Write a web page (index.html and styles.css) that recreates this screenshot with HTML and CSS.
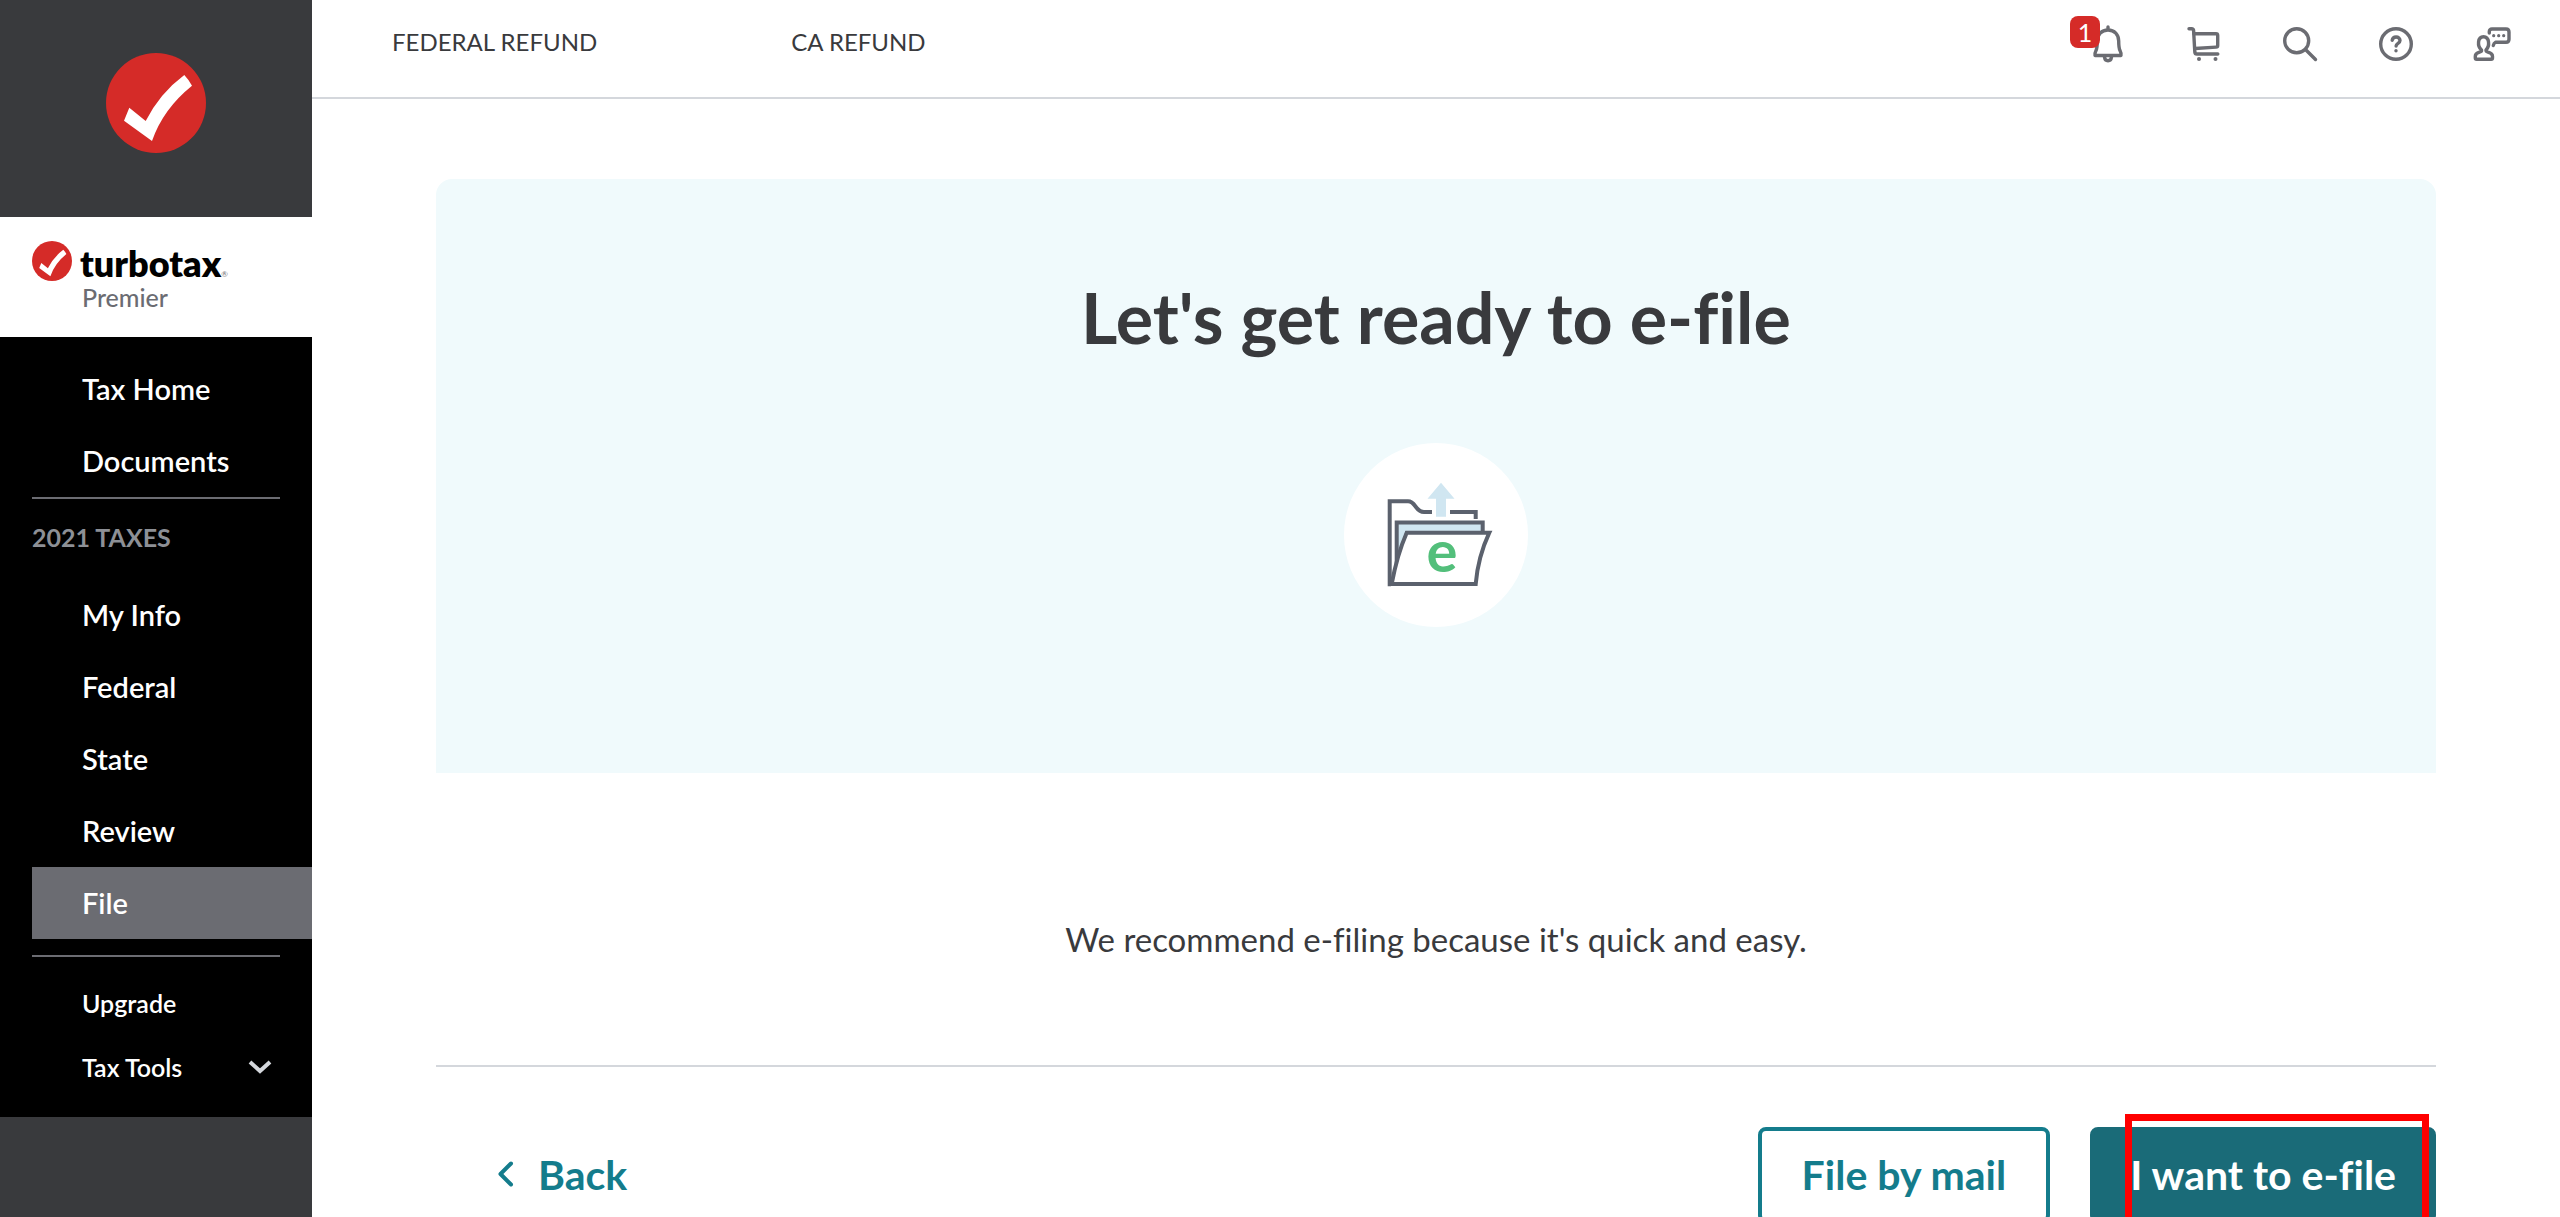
FILE: index.html
```html
<!DOCTYPE html>
<html lang="en">
<head>
    <meta charset="UTF-8">
    <meta name="viewport" content="width=device-width, initial-scale=1.0">
    <title>TurboTax - File</title>
    <link rel="stylesheet" href="styles.css">
</head>
<body>
    <!-- logo check, used twice -->
    <svg class="defs" aria-hidden="true">
        <symbol id="check" viewBox="0 0 100 100">
            <circle cx="50" cy="50" r="50" fill="#d52b28"/>
            <path fill="#fff" d="M23.3 54.7L18 67.7 46 88Q57 56 86 32.7Q83 27 78.3 22Q54 40 39.7 68Z"/>
        </symbol>
    </svg>

    <aside class="sidebar">
        <a class="logo" href="#" aria-label="Home"><svg><use href="#check"/></svg></a>
        <div class="brand">
            <svg><use href="#check"/></svg>
            <div class="brand-text">
                <div class="brand-name">turbotax<span class="reg">®</span></div>
                <div class="brand-plan">Premier</div>
            </div>
        </div>
        <nav class="nav">
            <a href="#">Tax Home</a>
            <a href="#">Documents</a>
            <hr>
            <h2>2021 TAXES</h2>
            <a href="#">My Info</a>
            <a href="#">Federal</a>
            <a href="#">State</a>
            <a href="#">Review</a>
            <a href="#" class="active">File</a>
            <hr class="spaced">
            <a href="#" class="small">Upgrade</a>
            <button type="button" class="small">Tax Tools
                <svg class="chevron" viewBox="0 0 24 14"><path d="M2 2l10 9L22 2"/></svg>
            </button>
        </nav>
    </aside>

    <div class="page">
        <header class="topbar">
            <div class="refunds">
                <span class="refund">FEDERAL REFUND</span>
                <span class="refund">CA REFUND</span>
            </div>
            <div class="tools">
                <button type="button" aria-label="Notifications">
                    <svg viewBox="0 0 40 40">
                        <path d="M20 3v3M20 6c-6.500 0-10.700 4.500-10.700 11 0 5 0 7-1.300 9.500-1 2-1.600 3.300-1 5h26c.6-1.700 0-3-1-5-1.300-2.500-1.300-4.500-1.300-9.500C30.700 10.500 26.500 6 20 6z"/>
                        <path d="M16.500 33c.3 2.300 1.600 3.700 3.500 3.700s3.200-1.400 3.500-3.700"/>
                    </svg>
                    <span class="badge">1</span>
                </button>
                <button type="button" aria-label="Cart">
                    <svg viewBox="0 0 40 40">
                        <path d="M5 4.700h2.500q2 0 2.100 2L10.800 28q.2 2 2 2h21"/>
                        <path d="M10 9.700h22q1.700 0 1.700 1.700v10q0 1.600-1.700 1.700L11 24.500"/>
                        <circle class="dot" cx="15" cy="35" r="2"/><circle class="dot" cx="31.500" cy="35" r="2"/>
                    </svg>
                </button>
                <button type="button" aria-label="Search">
                    <svg viewBox="0 0 40 40"><circle cx="16.700" cy="16.700" r="12"/><path d="M25.500 25.500L35.500 35.500"/></svg>
                </button>
                <button type="button" aria-label="Help">
                    <svg viewBox="0 0 40 40">
                        <circle cx="20" cy="20" r="15.300"/>
                        <path d="M16.200 16.300c.3-2 1.900-3.300 3.900-3.300 2.200 0 3.900 1.500 3.900 3.600 0 2.900-3.900 2.700-3.900 5.400"/>
                        <circle class="dot" cx="20" cy="26.700" r="1.700"/>
                    </svg>
                </button>
                <button type="button" aria-label="Live help">
                    <svg viewBox="0 0 40 40">
                        <path d="M17.300 9V7.500Q17.300 5 20 5h14q3 0 3 3v7.300q0 3-3 3H23.500q-1.700.7-2.200 3.200"/>
                        <path d="M9.500 26C5 22 5.500 12.700 11.500 12.700S18 22 14 26q-.2 1.500 2 2.200c3 .8 4.500 1.800 4.500 4V34q0 1.300-1.300 1.300H4.600Q3.300 35.300 3.300 34v-1.800c0-2.200 1.500-3.200 4.200-4 2-.6 2.300-1.200 2-2.200z"/>
                        <circle class="dot" cx="21.700" cy="11.700" r="1.600"/><circle class="dot" cx="26.700" cy="11.700" r="1.600"/><circle class="dot" cx="31.700" cy="11.700" r="1.600"/>
                    </svg>
                </button>
            </div>
        </header>

        <main class="content">
            <section class="hero">
                <h1>Let's get ready to e-file</h1>
                <svg class="folder" viewBox="0 0 184 184">
                    <circle cx="92" cy="92" r="92" fill="#fff"/>
                    <g fill="none" stroke="#5b616d" stroke-width="4">
                        <path d="M47 141.300H45.700v-83H64c8 0 7 10.700 16 10.700h8M106 69h25.700v7"/>
                        <path fill="#d0e6f1" d="M52.700 122V79.500h86V90H63z"/>
                        <path fill="#fff" d="M62.700 89.700h82.600Q134 114 131.700 141H47.700Q53 112 62.700 89.700z"/>
                    </g>
                    <path fill="#d0e6f1" d="M97 39.700l13.500 16H102v18H92v-18h-8.500z"/>
                    <text x="98" y="129" text-anchor="middle">e</text>
                </svg>
            </section>
            <p class="lead">We recommend e-filing because it's quick and easy.</p>
            <footer class="actions">
                <button type="button" class="back">
                    <svg viewBox="0 0 16 26"><path d="M13 2.500L2.500 13 13 23.500"/></svg>Back
                </button>
                <button type="button" class="btn outline">File by mail</button>
                <div class="highlighted">
                    <button type="button" class="btn primary">I want to e-file</button>
                    <span class="highlight"></span>
                </div>
            </footer>
        </main>
    </div>
</body>
</html>
```

FILE: styles.css
```css
* {
    box-sizing: border-box;
}
body {
    margin: 0;
    display: flex;
    height: 100vh;
    overflow: hidden;
    background: #fff;
    color: #393a3d;
    font-family: Lato, "Open Sans", sans-serif;
    font-variant-ligatures: none;
}
a {
    text-decoration: none;
}
button {
    font-family: inherit;
    font-variant-ligatures: none;
    border: 0;
    background: none;
    cursor: pointer;
}
svg {
    display: block;
}
.defs {
    position: absolute;
    width: 0;
    height: 0;
}

/* sidebar */
.sidebar {
    flex: 0 0 312px;
    background: #393a3d;
}
.logo {
    display: block;
    padding: 53px 106px 64px;
}
.logo svg {
    width: 100px;
    height: 100px;
}
.brand {
    display: flex;
    gap: 8px;
    height: 120px;
    padding: 24px 32px;
    background: #fff;
}
.brand svg {
    width: 40px;
    height: 40px;
}
.brand-name {
    color: #000;
    font-size: 36px;
    font-weight: 800;
    line-height: 44px;
}
.reg {
    color: #777;
    font-size: 8px;
    font-weight: 400;
    line-height: 8px;
}
.brand-plan {
    padding-left: 2px;
    color: #6b6c72;
    font-size: 25px;
    font-weight: 500;
    line-height: 24px;
}
.nav {
    padding: 16px 0;
    background: #000;
}
.nav a,
.nav button {
    display: flex;
    align-items: center;
    width: 280px;
    height: 72px;
    margin-left: 32px;
    padding: 0 32px 2px 50px;
    color: #fff;
    font-size: 29px;
    font-weight: 600;
}
.nav .active {
    background: #6b6c72;
}
.nav .small {
    height: 64px;
    padding-bottom: 4px;
    font-size: 25px;
}
.nav hr {
    height: 2px;
    margin: 0 32px;
    border: 0;
    background: #6b6c72;
}
.nav hr.spaced {
    margin: 16px 32px;
}
.nav h2 {
    margin: 0 32px 4px;
    color: #8d9096;
    font-size: 25px;
    font-weight: 700;
    line-height: 76px;
}
.chevron {
    width: 24px;
    height: 14px;
    margin-left: auto;
    margin-right: 8px;
    fill: none;
    stroke: #d4d7dc;
    stroke-width: 4;
}

/* top bar */
.page {
    flex: 1;
    min-width: 0;
}
.topbar {
    display: flex;
    justify-content: space-between;
    height: 99px;
    padding: 24px 48px 0 80px;
    border-bottom: 2px solid #d4d7dc;
}
.refunds {
    display: flex;
    gap: 194px;
    font-size: 24px;
    line-height: 36px;
}
.tools {
    display: flex;
    gap: 56px;
}
.tools button {
    position: relative;
    width: 40px;
    height: 40px;
    padding: 0;
}
.tools svg {
    fill: none;
    stroke: #6b6c72;
    stroke-width: 3.4;
    stroke-linecap: round;
    stroke-linejoin: round;
}
.tools .dot {
    fill: #6b6c72;
    stroke: none;
}
.badge {
    position: absolute;
    top: -8px;
    left: -18px;
    width: 30px;
    border-radius: 8px;
    background: #d52b28;
    color: #fff;
    font-size: 25px;
    line-height: 32px;
}

/* content */
.content {
    margin: 80px 124px 0;
}
.hero {
    height: 594px;
    padding-top: 96px;
    border-radius: 16px 16px 0 0;
    background: #f0fafc;
}
.hero h1 {
    margin: 0 0 84px;
    font-size: 70px;
    font-weight: 700;
    line-height: 84px;
    text-align: center;
}
.folder {
    width: 184px;
    height: 184px;
    margin: 0 auto;
}
.folder text {
    fill: #53bf7b;
    font-size: 58px;
    font-weight: 700;
}
.lead {
    margin: 0;
    padding: 142px 0 102px;
    border-bottom: 2px solid #d4d7dc;
    font-size: 33px;
    line-height: 48px;
    text-align: center;
}
.actions {
    display: flex;
    gap: 40px;
    padding-top: 60px;
}
.btn,
.back {
    height: 96px;
    font-size: 41px;
    font-weight: 700;
    white-space: nowrap;
}
.btn {
    padding: 0 40px 2px;
    border: 4px solid #1a6b78;
    border-radius: 8px;
}
.outline {
    border-color: #147c8c;
    color: #147c8c;
}
.primary {
    padding: 0 36px 2px;
    background: #1a6b78;
    color: #fff;
}
.back {
    display: flex;
    align-items: center;
    gap: 24px;
    margin-right: auto;
    padding: 0 62px 2px;
    color: #147c8c;
}
.back svg {
    width: 16px;
    height: 26px;
    fill: none;
    stroke: #147c8c;
    stroke-width: 4;
    stroke-linecap: round;
    stroke-linejoin: round;
}
.highlighted {
    position: relative;
}
/* red frame over the main action */
.highlight {
    position: absolute;
    top: -13px;
    right: 7px;
    bottom: -13px;
    left: 35px;
    border: 7px solid #f00;
    pointer-events: none;
}
```
